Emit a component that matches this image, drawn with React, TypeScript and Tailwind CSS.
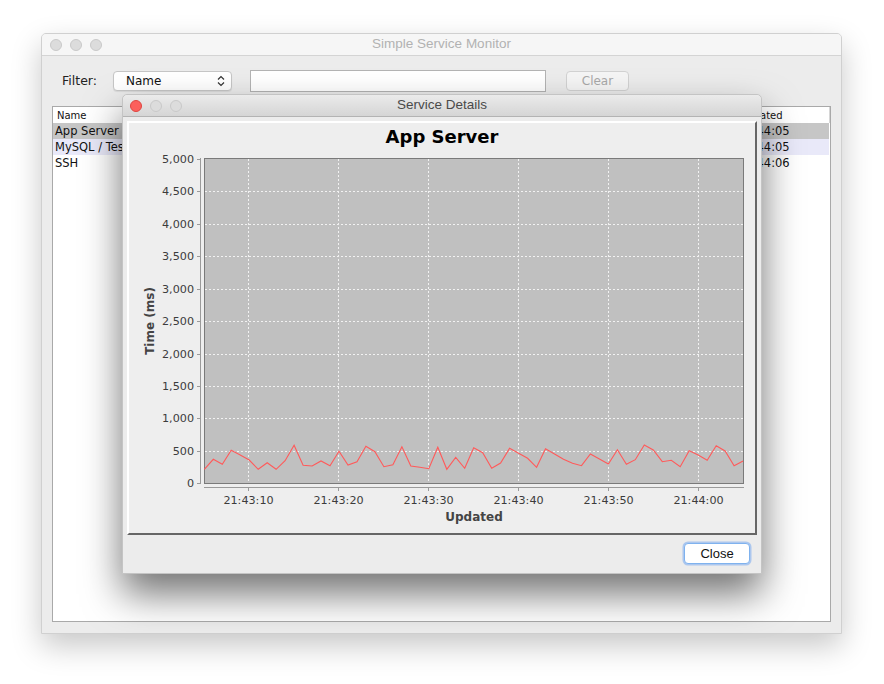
import React from "react";

const samples = [
  469.3, 459.3, 464.3, 450.3, 455, 460, 469.3, 462.7, 469.3, 460.7, 445.3, 465.3, 466, 461, 465.7,
  451.3, 465, 461.7, 446.3, 451.7, 466.7, 464.7, 446.7, 466, 467.3, 468.7, 447.3, 469.3, 457.3,
  468.3, 447.7, 452.7, 468.3, 463, 448.3, 453.3, 458.3, 467.3, 448.7, 454, 459.3, 463.3, 465.7,
  454, 459, 464, 449.7, 464.3, 459.7, 445, 450, 461.7, 460.3, 466.7, 450.7, 455, 460.3, 445.7,
  451, 465.7, 461,
];

const yTicks = [0, 500, 1000, 1500, 2000, 2500, 3000, 3500, 4000, 4500, 5000];
const xTicks = ["21:43:10", "21:43:20", "21:43:30", "21:43:40", "21:43:50", "21:44:00"];

const yPos = (v: number) => 483.3 - (v / 500) * 32.43;

function Lights({ active }: { active?: boolean }) {
  const gray = "w-[12px] h-[12px] rounded-full bg-[#dcdcdc] border border-[#c9c9c9]";
  return (
    <div className="flex items-center gap-[8px]">
      <div
        className={
          active
            ? "w-[12px] h-[12px] rounded-full bg-[#fc605c] border border-[#de4640]"
            : gray
        }
      />
      <div className={gray} />
      <div className={gray} />
    </div>
  );
}

function Chart() {
  const line = samples
    .map((y, i) => `${(204.3 + 8.98 * i).toFixed(1)},${y}`)
    .join(" ");
  return (
    <svg width={626} height={383} viewBox="129 150 626 383" className="block">
      <rect x={204.5} y={158.5} width={539} height={325} fill="#c0c0c0" stroke="#7a7a7a" />
      {yTicks.slice(1, -1).map((v) => (
        <line
          key={v}
          x1={205}
          x2={743}
          y1={Math.round(yPos(v)) + 0.5}
          y2={Math.round(yPos(v)) + 0.5}
          stroke="#f2f2f2"
          strokeDasharray="2 2"
        />
      ))}
      {xTicks.map((_, i) => (
        <line
          key={i}
          x1={248.5 + 90 * i}
          x2={248.5 + 90 * i}
          y1={159}
          y2={483}
          stroke="#f2f2f2"
          strokeDasharray="2 2"
        />
      ))}
      <polyline points={line} fill="none" stroke="#ff5a5a" strokeWidth={1.1} />

      {/* y axis */}
      <line x1={200.5} x2={200.5} y1={158} y2={484} stroke="#9a9a9a" />
      {yTicks.map((v) => (
        <g key={v}>
          <line
            x1={197}
            x2={200}
            y1={Math.round(yPos(v)) + 0.5}
            y2={Math.round(yPos(v)) + 0.5}
            stroke="#9a9a9a"
          />
          <text
            x={194}
            y={yPos(v)}
            dy="0.36em"
            textAnchor="end"
            fontFamily="'DejaVu Sans', sans-serif"
            fontSize={11.2}
            fill="#3c3c3c"
          >
            {v.toLocaleString("en-US")}
          </text>
        </g>
      ))}
      <text
        transform="translate(153.5 321) rotate(-90)"
        textAnchor="middle"
        fontFamily="'DejaVu Sans', sans-serif"
        fontWeight="bold"
        fontSize={12}
        fill="#444"
      >
        Time (ms)
      </text>

      {/* x axis */}
      <line x1={204} x2={744} y1={487.5} y2={487.5} stroke="#9a9a9a" />
      {xTicks.map((t, i) => (
        <g key={t}>
          <line x1={248.5 + 90 * i} x2={248.5 + 90 * i} y1={488} y2={491} stroke="#9a9a9a" />
          <text
            x={248.5 + 90 * i}
            y={503.5}
            textAnchor="middle"
            fontFamily="'DejaVu Sans', sans-serif"
            fontSize={11.2}
            fill="#3c3c3c"
          >
            {t}
          </text>
        </g>
      ))}
      <text
        x={474}
        y={520.5}
        textAnchor="middle"
        fontFamily="'DejaVu Sans', sans-serif"
        fontWeight="bold"
        fontSize={12}
        fill="#444"
      >
        Updated
      </text>
    </svg>
  );
}

const rows = [
  { name: "App Server", updated: "21:44:05", bg: "bg-[#c6c6c6]" },
  { name: "MySQL / Test DB", updated: "21:44:05", bg: "bg-[#e9e9f9]" },
  { name: "SSH", updated: "21:44:06", bg: "" },
];

export default function App() {
  return (
    <div className="relative w-[884px] h-[684px] bg-white overflow-hidden pl-[41px] pt-[33px] font-['DejaVu_Sans',sans-serif]">
      {/* main window */}
      <div className="w-[801px] h-[601px] flex flex-col rounded-t-[5px] bg-[#ececec] border border-[#d0d0d0] shadow-[0_12px_30px_rgba(0,0,0,0.22)] overflow-hidden">
        <div className="h-[22px] shrink-0 grid grid-cols-[1fr_auto_1fr] items-center bg-[#f6f6f6] border-b border-[#d4d4d4] px-[8px]">
          <Lights />
          <span className="font-['Liberation_Sans',sans-serif] text-[13.5px] text-[#b2b2b2]">
            Simple Service Monitor
          </span>
          <span />
        </div>

        <div className="flex items-center h-[22px] mt-[14px] pl-[20px]">
          <span className="text-[12.5px] text-[#222]">Filter:</span>
          <div className="ml-[16px] w-[119px] h-[20px] flex items-center justify-between pl-[12px] pr-[6px] bg-white border border-[#c6c6c6] rounded-[4px] shadow-[0_1px_1px_rgba(0,0,0,0.08)]">
            <span className="text-[12px] text-[#111]">Name</span>
            <svg width="8" height="12" viewBox="0 0 8 12">
              <path d="M1 4.5 L4 1.5 L7 4.5 M1 7.5 L4 10.5 L7 7.5" fill="none" stroke="#333" strokeWidth="1.2" />
            </svg>
          </div>
          <div className="ml-[18px] w-[296px] h-[22px] bg-white border border-[#b3b3b3]" />
          <div className="ml-[20px] w-[63px] h-[20px] flex items-center justify-center bg-[#f5f5f5] border border-[#d2d2d2] rounded-[4px]">
            <span className="text-[12px] text-[#a9a9a9]">Clear</span>
          </div>
        </div>

        <div className="flex-1 mt-[14px] mx-[10px] mb-[11px] bg-white border border-[#a9a9a9] flex flex-col">
          <div className="h-[16px] grid grid-cols-[1fr_92px] text-[10px] text-[#111] items-center">
            <span className="pl-[4px]">Name</span>
            <span className="pl-[2px] border-r border-[#d6d6d6] h-full flex items-center">Updated</span>
          </div>
          {rows.map((r) => (
            <div
              key={r.name}
              className={`h-[16px] grid grid-cols-[1fr_92px] items-center text-[11.5px] text-[#111] mr-[1px] ${r.bg}`}
            >
              <span className="pl-[2px]">{r.name}</span>
              <span className="pl-[1px]">{r.updated}</span>
            </div>
          ))}
        </div>
      </div>

      {/* details dialog */}
      <div className="absolute left-[122px] top-[94px] w-[640px] h-[480px] flex flex-col bg-[#ececec] rounded-t-[5px] border border-[#c4c4c4] shadow-[0_20px_38px_rgba(0,0,0,0.55)]">
        <div className="h-[22px] shrink-0 grid grid-cols-[1fr_auto_1fr] items-center px-[7px] rounded-t-[5px] bg-gradient-to-b from-[#ebebeb] to-[#d5d5d5] border-b border-[#b3b3b3]">
          <Lights active />
          <span className="font-['Liberation_Sans',sans-serif] text-[13.5px] text-[#4a4a4a]">
            Service Details
          </span>
          <span />
        </div>

        <div className="mt-[4px] ml-[4px] w-[630px] h-[414px] bg-[#eeeeee] border-2 border-t-white border-l-white border-r-[#666] border-b-[#666] flex flex-col">
          <div className="h-[27px] flex items-center justify-center">
            <span className="text-[18px] font-bold text-black">App Server</span>
          </div>
          <Chart />
        </div>

        <div className="flex-1 flex items-center justify-end pr-[11px] pb-[1px]">
          <button className="w-[66px] h-[21px] bg-white border border-[#7fb2ee] rounded-[4px] shadow-[0_0_0_1.5px_rgba(120,170,240,0.55)] font-['Liberation_Sans',sans-serif] text-[13px] text-[#111] leading-none">
            Close
          </button>
        </div>
      </div>
    </div>
  );
}
